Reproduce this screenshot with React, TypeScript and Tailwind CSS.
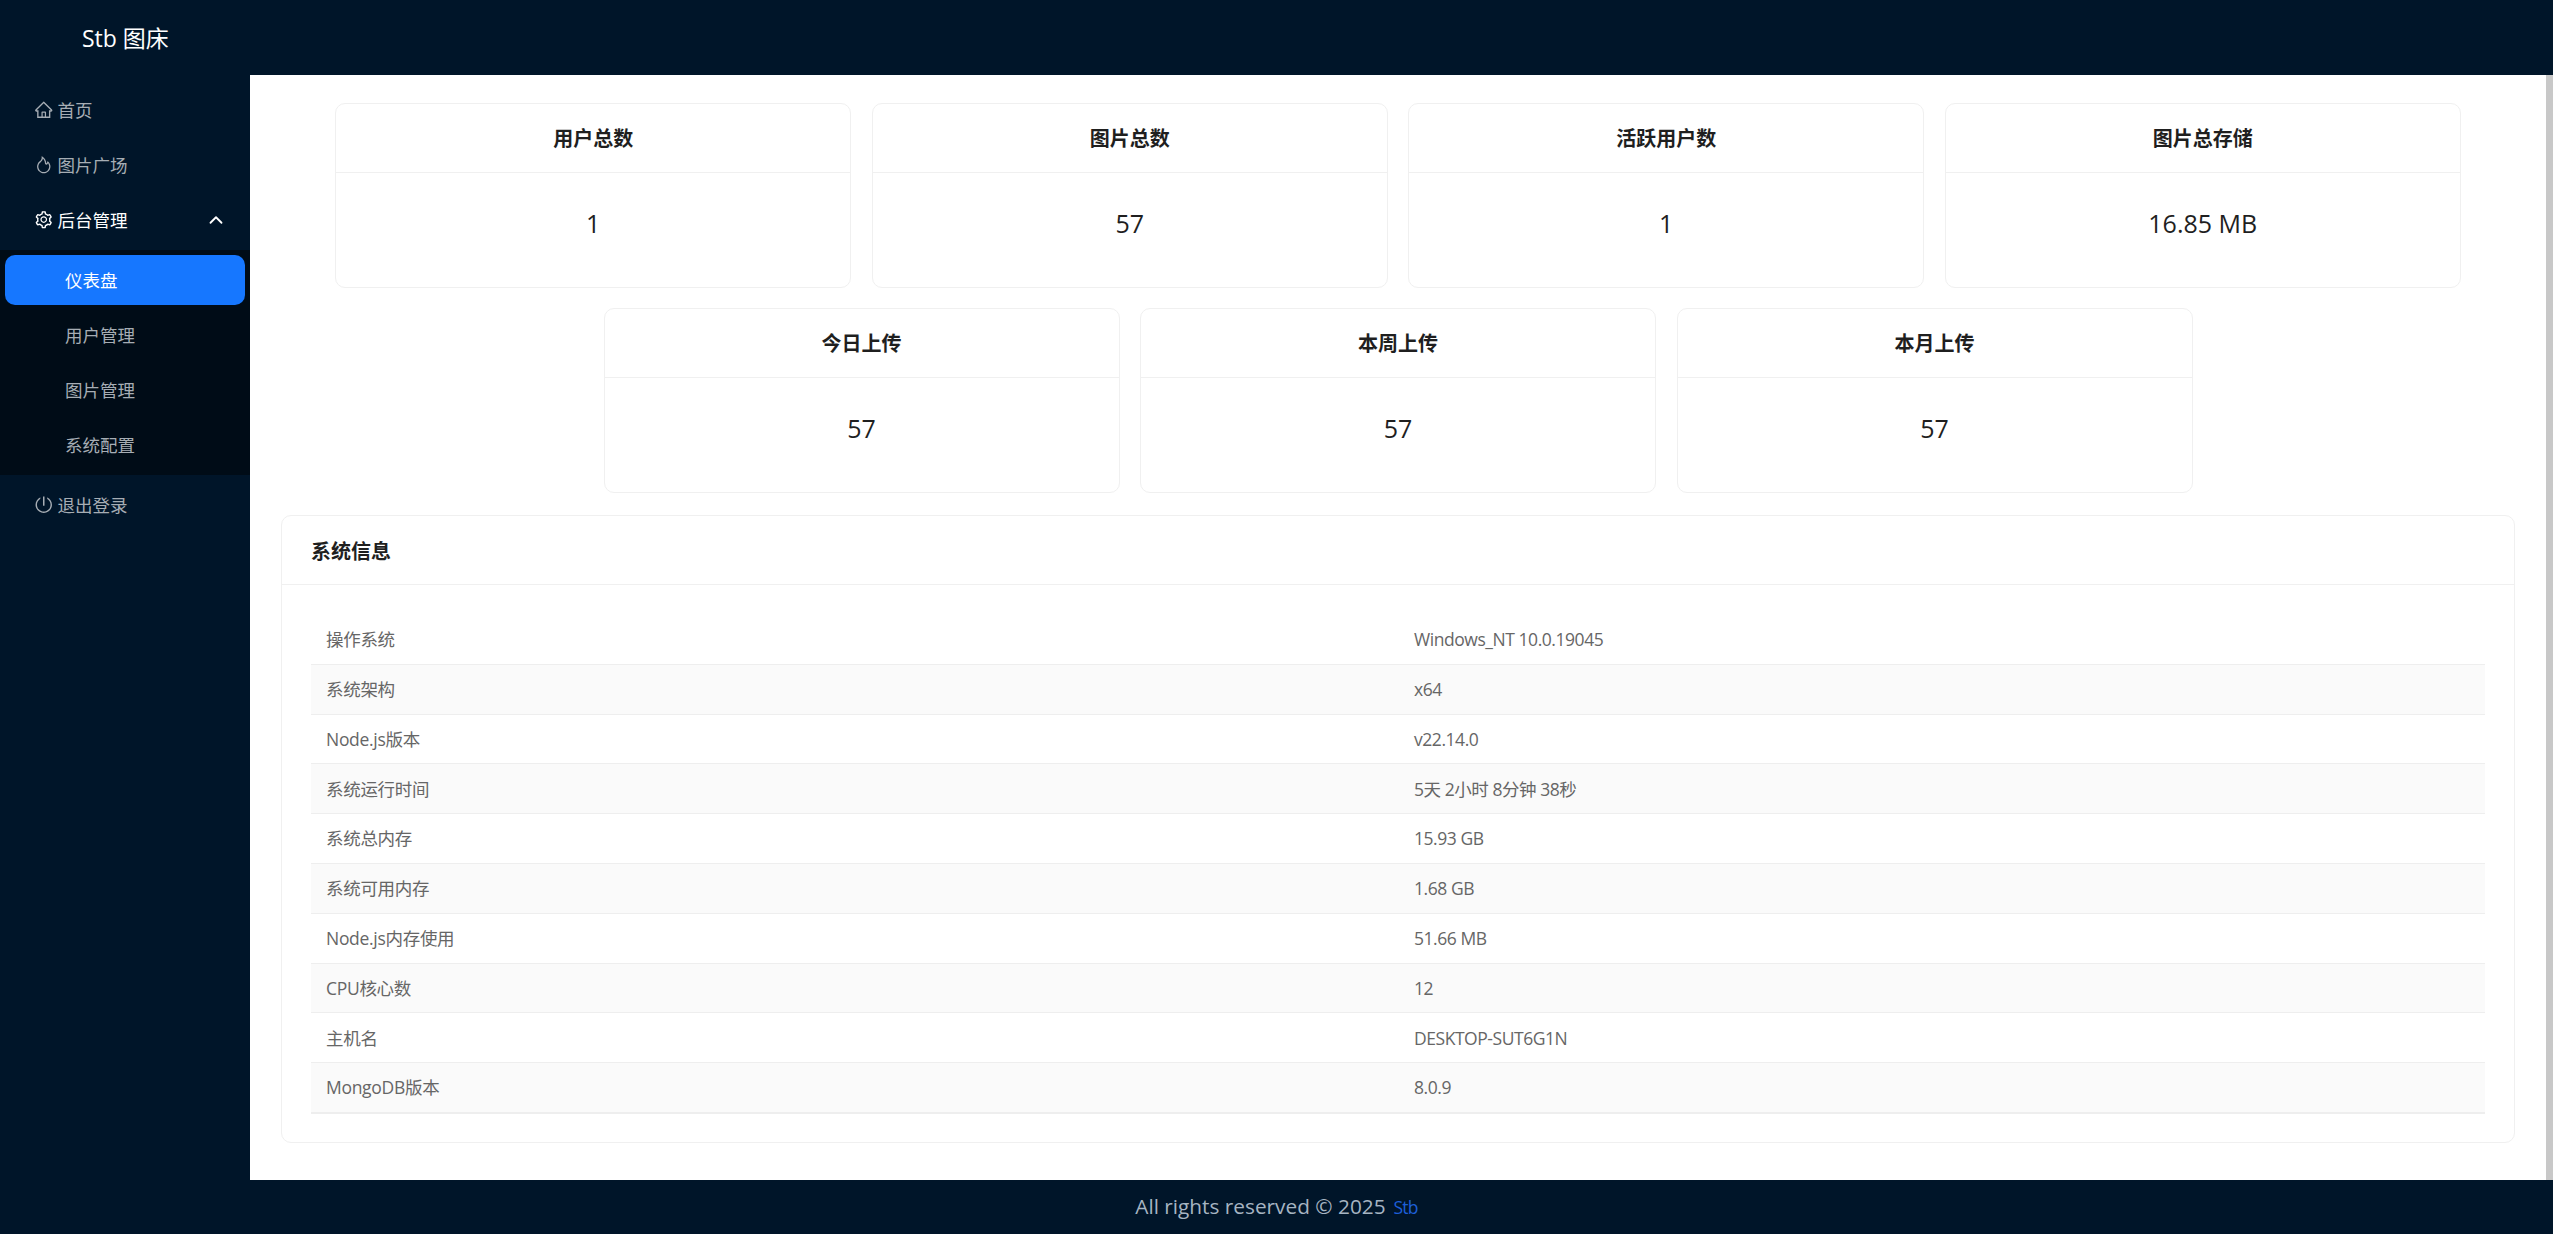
import React from "react";
import { ChevronUp } from "lucide-react";
import { AiOutlineHome, AiOutlineFire, AiOutlineSetting, AiOutlinePoweroff } from "react-icons/ai";

const topStats = [
  { label: "用户总数", value: "1" },
  { label: "图片总数", value: "57" },
  { label: "活跃用户数", value: "1" },
  { label: "图片总存储", value: "16.85 MB" },
];

const uploadStats = [
  { label: "今日上传", value: "57" },
  { label: "本周上传", value: "57" },
  { label: "本月上传", value: "57" },
];

const sysInfo = [
  ["操作系统", "Windows_NT 10.0.19045"],
  ["系统架构", "x64"],
  ["Node.js版本", "v22.14.0"],
  ["系统运行时间", "5天 2小时 8分钟 38秒"],
  ["系统总内存", "15.93 GB"],
  ["系统可用内存", "1.68 GB"],
  ["Node.js内存使用", "51.66 MB"],
  ["CPU核心数", "12"],
  ["主机名", "DESKTOP-SUT6G1N"],
  ["MongoDB版本", "8.0.9"],
];

const StatCard = ({ label, value }: { label: string; value: string }) => (
  <div className="w-[516px] h-[185px] border border-[#f0f0f0] rounded-[10px] bg-white">
    <div className="h-[69px] pt-[2px] flex items-center justify-center border-b border-[#f0f0f0] text-[20px] font-semibold text-[#1f1f1f]">
      {label}
    </div>
    <div className="h-[114px] pb-[13px] flex items-center justify-center text-[25px] text-[#1f1f1f]">{value}</div>
  </div>
);

const NavItem = ({ icon, label }: { icon: React.ReactNode; label: string }) => (
  <div className="h-[50px] flex items-center pl-[34px] gap-[4px] text-[17.5px] text-[#a6adb4]">
    {icon}
    <span>{label}</span>
  </div>
);

const SubItem = ({ label, active }: { label: string; active?: boolean }) => (
  <div
    className={`h-[50px] mx-[5px] flex items-center pl-[60px] rounded-[10px] text-[17.5px] ${
      active ? "bg-[#1677ff] text-white" : "text-[#a6adb4]"
    }`}
  >
    {label}
  </div>
);

export default function App() {
  return (
    <div
      className="w-full h-[1234px] overflow-hidden bg-white"
      style={{ fontFamily: '"Open Sans", "Noto Sans CJK SC", sans-serif' }}
    >
      <div className="w-[2553px] h-full flex flex-col bg-[#001529]">
        <header className="h-[75px] shrink-0 flex items-center pl-[82px] pt-[2px] text-white text-[23px]">
          Stb 图床
        </header>
        <div className="flex-1 flex min-h-0">
          <aside className="w-[250px] shrink-0 pt-[10px]">
            <div className="flex flex-col gap-[5px]">
              <NavItem icon={<AiOutlineHome size={19.5} />} label="首页" />
              <NavItem icon={<AiOutlineFire size={19.5} />} label="图片广场" />
              <div className="h-[50px] flex items-center pl-[34px] pr-[23px] gap-[4px] text-[17.5px] text-white">
                <AiOutlineSetting size={19.5} />
                <span className="flex-1">后台管理</span>
                <ChevronUp size={22} strokeWidth={2} />
              </div>
            </div>
            <div className="mt-[5px] bg-[#000c17] py-[5px] flex flex-col gap-[5px]">
              <SubItem label="仪表盘" active />
              <SubItem label="用户管理" />
              <SubItem label="图片管理" />
              <SubItem label="系统配置" />
            </div>
            <div className="mt-[5px]">
              <NavItem icon={<AiOutlinePoweroff size={19.5} />} label="退出登录" />
            </div>
          </aside>
          <main className="flex-1 min-w-0 flex bg-white">
            <div className="flex-1 min-w-0 pt-[28px] px-[31px]">
              <div className="flex justify-center gap-[20.5px]">
                {topStats.map((s) => (
                  <StatCard key={s.label} {...s} />
                ))}
              </div>
              <div className="flex justify-center gap-[20.5px] mt-[20px]">
                {uploadStats.map((s) => (
                  <StatCard key={s.label} {...s} />
                ))}
              </div>
              <section className="mt-[22px] h-[628px] border border-[#f0f0f0] rounded-[10px]">
                <div className="h-[69px] pt-[3px] flex items-center pl-[29px] border-b border-[#f0f0f0] text-[20px] font-semibold text-[#1f1f1f]">
                  系统信息
                </div>
                <div className="px-[29px] pt-[30px]">
                  <div className="border-b border-[#eeeeee]">
                    {sysInfo.map(([name, val], i) => (
                      <div
                        key={name}
                        className={`h-[49.8px] flex items-center border-b border-[#eeeeee] text-[17.5px] text-[#666666] ${
                          i % 2 === 1 ? "bg-[#fafafa]" : ""
                        }`}
                      >
                        <div className="w-1/2 pl-[15px] tracking-[-0.3px]">{name}</div>
                        <div className="w-1/2 pl-[16px] tracking-[-0.45px]">{val}</div>
                      </div>
                    ))}
                  </div>
                </div>
              </section>
            </div>
            <div className="w-[7px] shrink-0 bg-[#c8c8c8]" />
          </main>
        </div>
        <footer className="h-[54px] shrink-0 flex items-baseline justify-center gap-[8px] pt-[11px] text-[20.8px] text-[#a6b4c2]">
          <span>All rights reserved © 2025</span>
          <span className="text-[#1d5fd8] text-[17.5px] tracking-[-0.8px]">Stb</span>
        </footer>
      </div>
    </div>
  );
}
